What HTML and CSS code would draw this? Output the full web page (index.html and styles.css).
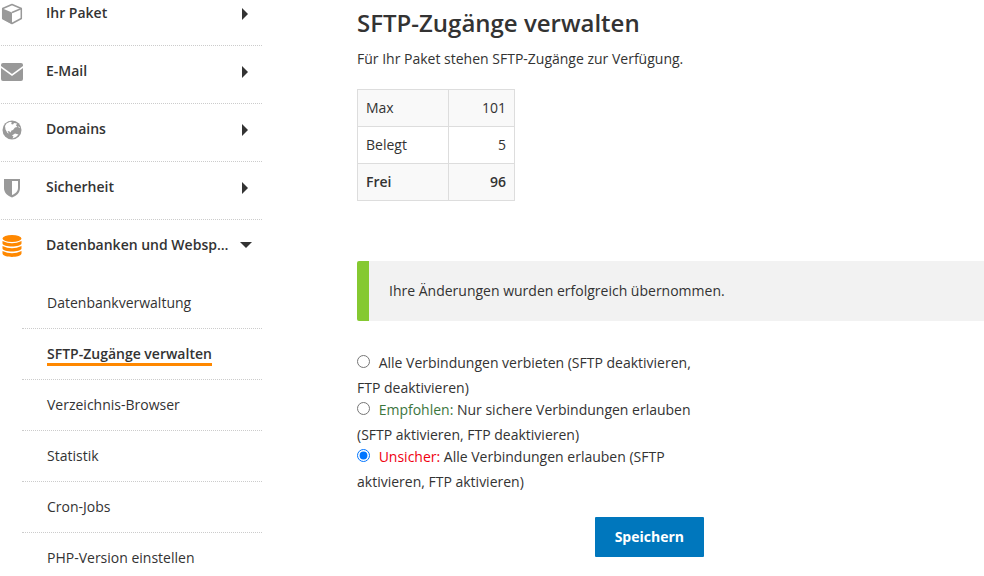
FILE: index.html
```html
<!DOCTYPE html>
<html lang="de">
<head>
    <meta charset="UTF-8">
    <meta name="viewport" content="width=device-width, initial-scale=1.0">
    <title>SFTP-Zugänge verwalten</title>
    <link rel="stylesheet" href="styles.css">
</head>
<body>

<div class="page">
    <nav class="sidebar">
        <ul class="menu">
            <li>
                <a class="menu-link" href="#">
                    <svg class="icon" viewBox="0 0 22 22">
                        <path d="M11 1.500 20.300 5.500V15.500L11 20.500 1.700 15.500V5.500Z" fill="#fff" stroke="#999" stroke-width="1.500" stroke-linejoin="round"/>
                        <path d="M1.500 5.500 11 9.500V21L1.500 16Z" fill="#999"/>
                        <path d="M11 9.500 20.500 5.500" stroke="#999" stroke-width="1.500"/>
                    </svg>
                    <span class="menu-text">Ihr Paket</span>
                    <span class="arrow"></span>
                </a>
            </li>
            <li>
                <a class="menu-link" href="#">
                    <svg class="icon" viewBox="0 0 22 22">
                        <path d="M2 2H20Q22 2 22 4V5L11 13 0 5V4Q0 2 2 2Z" fill="#999"/>
                        <path d="M0 7 11 15 22 7V18Q22 20 20 20H2Q0 20 0 18Z" fill="#999"/>
                    </svg>
                    <span class="menu-text">E-Mail</span>
                    <span class="arrow"></span>
                </a>
            </li>
            <li>
                <a class="menu-link" href="#">
                    <svg class="icon" viewBox="0 0 22 22">
                        <circle cx="11" cy="11" r="9.500" fill="#999"/>
                        <path d="M5.500 4.500 9 2.800 11 3.500 10 5 12 5.500 13 4 16 4.500 15 6.500 16.500 8 14 8.500 12 11 10.500 11.500 9.500 13.500 8 12 6.500 12.500 8 14.500 6.500 14 4.500 10.500 4 7Z" fill="#fff"/>
                        <path d="M11 16.500 14 14.500 17.500 15.500 15 18 11.500 19.500 12.500 17.500Z" fill="#fff"/>
                        <path d="M17 7 19 8.500 18 9Z" fill="#fff"/>
                    </svg>
                    <span class="menu-text">Domains</span>
                    <span class="arrow"></span>
                </a>
            </li>
            <li>
                <a class="menu-link" href="#">
                    <svg class="icon" viewBox="0 0 22 22">
                        <path d="M3 2H19V11C19 16 15.500 18.500 11 20.500 6.500 18.500 3 16 3 11Z" fill="#999"/>
                        <path d="M11 4H17V11C17 14.500 14.500 16.500 11 18Z" fill="#fff"/>
                    </svg>
                    <span class="menu-text">Sicherheit</span>
                    <span class="arrow"></span>
                </a>
            </li>
            <li class="open">
                <a class="menu-link" href="#">
                    <svg class="icon" viewBox="0 0 22 22" fill="#ff8800">
                        <ellipse cx="11" cy="3.500" rx="9.500" ry="3.500"/>
                        <path d="M1.500 6Q11 10.500 20.500 6V8.500C20 12.500 2 12.500 1.500 8.500Z"/>
                        <path d="M1.500 11Q11 15.500 20.500 11V13.500C20 17.500 2 17.500 1.500 13.500Z"/>
                        <path d="M1.500 16Q11 20.500 20.500 16V18.500C20 23 2 23 1.500 18.500Z"/>
                    </svg>
                    <span class="menu-text">Datenbanken und Webspace</span>
                    <span class="arrow arrow-down"></span>
                </a>
                <ul class="submenu">
                    <li><a href="#">Datenbankverwaltung</a></li>
                    <li><a class="active" href="#">SFTP-Zugänge verwalten</a></li>
                    <li><a href="#">Verzeichnis-Browser</a></li>
                    <li><a href="#">Statistik</a></li>
                    <li><a href="#">Cron-Jobs</a></li>
                    <li><a href="#">PHP-Version einstellen</a></li>
                </ul>
            </li>
        </ul>
    </nav>

    <main class="content">
        <h1>SFTP-Zugänge verwalten</h1>
        <p>Für Ihr Paket stehen SFTP-Zugänge zur Verfügung.</p>

        <table class="quota">
            <tr>
                <th>Max</th>
                <td>101</td>
            </tr>
            <tr>
                <th>Belegt</th>
                <td>5</td>
            </tr>
            <tr class="total">
                <th>Frei</th>
                <td>96</td>
            </tr>
        </table>

        <div class="message" role="status">Ihre Änderungen wurden erfolgreich übernommen.</div>

        <form class="access-form">
            <div class="option">
                <input type="radio" name="access" id="access-none" value="none">
                <label for="access-none">Alle Verbindungen verbieten (SFTP deaktivieren, FTP deaktivieren)</label>
            </div>
            <div class="option">
                <input type="radio" name="access" id="access-sftp" value="sftp">
                <label for="access-sftp"><span class="safe">Empfohlen:</span> Nur sichere Verbindungen erlauben (SFTP aktivieren, FTP deaktivieren)</label>
            </div>
            <div class="option">
                <input type="radio" name="access" id="access-all" value="all" checked>
                <label for="access-all"><span class="unsafe">Unsicher:</span> Alle Verbindungen erlauben (SFTP aktivieren, FTP aktivieren)</label>
            </div>
            <button class="save-btn" type="submit">Speichern</button>
        </form>
    </main>
</div>

</body>
</html>
```
FILE: styles.css
```css
body {
    margin: 0;
    background-color: #fff;
    color: #333;
    font-family: "Open Sans", Arial, sans-serif;
    font-size: 14px;
    line-height: 22px;
}
a {
    color: inherit;
    text-decoration: none;
}
ul {
    list-style: none;
    margin: 0;
    padding: 0;
}
.page {
    display: flex;
    gap: 95px;
}

/* Navigation */
.sidebar {
    flex: 0 0 261px;
    margin-left: 1px;
}
.menu > li {
    border-bottom: 1px dotted #ccc;
}
.menu > li.open {
    border-bottom: none;
}
.menu-link {
    display: flex;
    align-items: center;
    padding: 12px 10px 19px 0;
    line-height: 26px;
    font-weight: 600;
}
.menu > li:first-child .menu-link {
    padding-top: 0;
}
.icon {
    flex: none;
    width: 22px;
    height: 22px;
    margin-top: 2px;
    margin-right: 23px;
}
.menu-text {
    flex: 0 1 184px;
    overflow: hidden;
    white-space: nowrap;
    text-overflow: ellipsis;
}
.arrow {
    margin: 2px 4px 0 auto;
    border-style: solid;
    border-width: 6px 0 6px 6px;
    border-color: transparent transparent transparent #333;
}
.arrow-down {
    margin: 0 0 0 auto;
    border-width: 6px 6px 0 6px;
    border-color: #333 transparent transparent transparent;
}
.submenu {
    padding: 1px 0 0 21px;
}
.submenu li {
    display: flex;
    padding: 16px 0 13px 25px;
    border-bottom: 1px dotted #ccc;
}
.submenu li:last-child {
    border-bottom: none;
}
.submenu a {
    line-height: 18px;
    border-bottom: 3px solid transparent;
}
.submenu a.active {
    font-weight: 600;
    border-bottom-color: #ff8800;
}

/* Inhalt */
.content {
    flex: 1;
    min-width: 0;
    padding-top: 7px;
}
.content h1 {
    margin: 0 0 9px;
    font-size: 24px;
    line-height: 32px;
    font-weight: 600;
}
.content p {
    margin: 0 0 19px;
}
.quota {
    margin-bottom: 60px;
    border-collapse: collapse;
}
.quota th,
.quota td {
    box-sizing: border-box;
    padding: 7px 8px;
    border: 1px solid #ddd;
    font-weight: 400;
}
.quota th {
    width: 91px;
    text-align: left;
}
.quota td {
    width: 66px;
    text-align: right;
}
.quota tr:nth-child(odd) {
    background-color: #f9f9f9;
}
.quota .total th,
.quota .total td {
    font-weight: 600;
}
.message {
    margin-bottom: 31px;
    padding: 19px 20px;
    border-left: 12px solid #85c931;
    border-radius: 2px 0 0 2px;
    background-color: #f2f2f2;
}
.access-form {
    max-width: 347px;
}
.option input {
    width: 13px;
    height: 13px;
    margin: 3px 5px 9px 0;
    vertical-align: top;
}
.safe {
    color: #3c763d;
}
.unsafe {
    color: #f00010;
}
.save-btn {
    display: block;
    margin: 24px 0 19px auto;
    padding: 9px 20px;
    border: none;
    border-radius: 1px;
    background-color: #0077bd;
    color: #fff;
    font-family: inherit;
    font-size: 14px;
    line-height: 22px;
    font-weight: 700;
    cursor: pointer;
}
```
